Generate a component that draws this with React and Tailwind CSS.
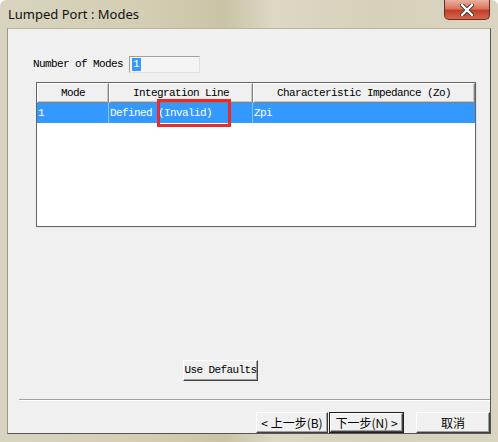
import React from 'react';

const mono = { fontFamily: '"Liberation Mono", "Noto Sans CJK SC", monospace' };
const cjk = { fontFamily: '"Noto Sans CJK SC", "Liberation Sans", sans-serif' };

const Btn = ({ children, className = '', style = mono }) => (
  <div
    style={style}
    className={`flex items-center justify-center bg-[#f0f0f0] border border-t-white border-l-white border-r-[#404040] border-b-[#404040] shadow-[inset_-1px_-1px_0_#a0a0a0] text-[11px] tracking-[-0.6px] text-black ${className}`}
  >
    {children}
  </div>
);

const HeadCell = ({ children, w }) => (
  <div
    className={`${w} h-[20px] flex items-center justify-center bg-[#f0f0f0] border border-t-white border-l-white border-r-[#808080] border-b-[#808080] shadow-[inset_-1px_-1px_0_#c8c8c8]`}
  >
    {children}
  </div>
);

export default function App() {
  return (
    <div className="w-[498px] h-[442px] flex flex-col bg-[linear-gradient(90deg,#d9d4bf_0%,#d3cdb3_30%,#c9c4a6_45%,#dcd8c4_55%,#d6d1ba_75%,#d9d5c1_100%)] rounded-t-[6px] overflow-hidden">
      {/* Title bar */}
      <div className="h-[29px] flex items-start">
        <div className="pl-[8px] pt-[5px] text-[13px] text-[#111]" style={{ fontFamily: '"Noto Sans", "Liberation Sans", sans-serif' }}>
          Lumped Port : Modes
        </div>
        <div className="ml-auto mr-[8px] w-[46px] h-[20px] rounded-b-[5px] border border-t-0 border-[#6e2a20] bg-[linear-gradient(180deg,#eab1a0_0%,#d9765c_45%,#c2402a_55%,#d4664c_100%)] flex items-center justify-center">
          <svg width="14" height="12" viewBox="0 0 14 12">
            <path d="M2 1 L12 11 M12 1 L2 11" stroke="#3a3a3a" strokeWidth="4.2" strokeLinecap="round" />
            <path d="M2 1 L12 11 M12 1 L2 11" stroke="#ffffff" strokeWidth="2.4" strokeLinecap="round" />
          </svg>
        </div>
      </div>

      {/* Client */}
      <div className="flex-1 ml-[7px] mr-[7px] mb-[8px] bg-[#f0f0f0] border border-t-[#b8b4a0] border-l-[#9a9888] border-r-[#555] border-b-[#555] flex flex-col text-black" style={mono}>
        {/* Number of modes */}
        <div className="flex items-center mt-[26px] ml-[25px] h-[18px]">
          <span className="text-[11px] tracking-[-0.6px]">Number of Modes</span>
          <div className="ml-[6px] w-[71px] h-[17px] bg-[#f4f4f4] border border-t-[#a0a0a0] border-l-[#a0a0a0] border-r-[#e0e0e0] border-b-[#e0e0e0] flex items-center pl-[2px]">
            <span className="bg-[#3399ff] text-white text-[11px] leading-[13px] px-[1px]">1</span>
          </div>
        </div>

        {/* Table */}
        <div className="relative ml-[28px] mt-[9px] w-[440px] h-[145px] bg-white border border-[#646464] shadow-[1px_1px_0_#e4e4e4] text-[11px] tracking-[-0.6px]">
          <div className="flex">
            <HeadCell w="w-[72px]">Mode</HeadCell>
            <HeadCell w="w-[144px]">Integration Line</HeadCell>
            <HeadCell w="w-[222px]">Characteristic Impedance (Zo)</HeadCell>
          </div>
          <div className="flex h-[20px] bg-[#3399ff] text-white">
            <div className="w-[72px] pl-[1px] flex items-center border-r border-[#8cc0f0]">1</div>
            <div className="w-[144px] pl-[1px] flex items-center border-r border-[#8cc0f0] whitespace-pre">Defined (Invalid)</div>
            <div className="w-[222px] pl-[1px] flex items-center">Zpi</div>
          </div>
          {/* Annotation box */}
          <div className="absolute left-[120px] top-[16px] w-[74px] h-[28px] border-[3px] border-[#f0282a]" />
        </div>

        {/* Use defaults */}
        <Btn className="ml-[175px] mt-[133px] w-[75px] h-[21px]">Use Defaults</Btn>

        {/* Separator */}
        <div className="ml-[11px] mt-[18px] h-[2px] border-t border-[#a0a0a0] border-b border-b-white" />

        {/* Bottom buttons */}
        <div className="flex mt-[11px] ml-[248px]">
          <Btn className="w-[73px] h-[21px] text-[12px] tracking-normal" style={cjk}>&lt; 上一步(B)</Btn>
          <div className="ml-[1px] border border-[#202020]">
            <Btn className="w-[73px] h-[19px] text-[12px] tracking-normal" style={cjk}>下一步(N) &gt;</Btn>
          </div>
          <Btn className="ml-[12px] w-[75px] h-[21px] text-[12px] tracking-normal" style={cjk}>取消</Btn>
        </div>
      </div>
    </div>
  );
}
